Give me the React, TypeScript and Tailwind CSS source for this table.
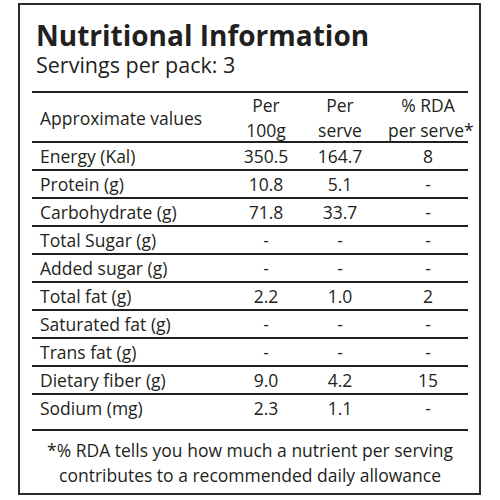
const rows = [
  { name: "Energy (Kal)", per100: "350.5", serve: "164.7", rda: "8" },
  { name: "Protein (g)", per100: "10.8", serve: "5.1", rda: "-" },
  { name: "Carbohydrate (g)", per100: "71.8", serve: "33.7", rda: "-" },
  { name: "Total Sugar (g)", per100: "-", serve: "-", rda: "-" },
  { name: "Added sugar (g)", per100: "-", serve: "-", rda: "-" },
  { name: "Total fat (g)", per100: "2.2", serve: "1.0", rda: "2" },
  { name: "Saturated fat (g)", per100: "-", serve: "-", rda: "-" },
  { name: "Trans fat (g)", per100: "-", serve: "-", rda: "-" },
  { name: "Dietary fiber (g)", per100: "9.0", serve: "4.2", rda: "15" },
  { name: "Sodium (mg)", per100: "2.3", serve: "1.1", rda: "-" },
];

export default function App() {
  return (
    <div
      className="w-[500px] h-[500px] bg-white text-[#231f20] pt-[3px] pl-[18px]"
      style={{ fontFamily: '"Open Sans", "Noto Sans", sans-serif' }}
    >
      <div className="w-[463px] h-[492px] border-2 border-[#2b2b2b] pl-[12px] pr-[11px] flex flex-col">
        <div className="pl-[4px] pt-[14px] h-[86px]">
          <h1 className="text-[28px] leading-[32px] font-bold">Nutritional Information</h1>
          <p className="text-[21.5px] leading-[24px] mt-[2px]">Servings per pack: 3</p>
        </div>

        <div className="border-t-2 border-[#231f20]">
          <div className="grid grid-cols-[198px_72px_76px_90px] h-[50px] items-center text-[17.5px] leading-[25px] whitespace-nowrap border-b-2 border-[#231f20]">
            <div className="pl-[8px]">Approximate values</div>
            <div className="text-center">
              Per
              <br />
              100g
            </div>
            <div className="text-center">
              Per
              <br />
              serve
            </div>
            <div className="text-center pl-[10px]">
              % RDA
              <br />
              per serve*
            </div>
          </div>

          {rows.map((r, i) => (
            <div
              key={r.name}
              className={
                "grid grid-cols-[198px_72px_76px_90px] items-center text-[17.5px] leading-[22px] border-b-2 border-[#231f20] " +
                (i === rows.length - 1 ? "h-[36px] pb-[8px]" : "h-[28px]")
              }
            >
              <div className="pl-[8px]">{r.name}</div>
              <div className="text-center">{r.per100}</div>
              <div className="text-center">{r.serve}</div>
              <div className="text-center pl-[10px]">{r.rda}</div>
            </div>
          ))}
        </div>

        <p className="text-[17.5px] leading-[25px] text-center pt-[7px]">
          *% RDA tells you how much a nutrient per serving
          <br />
          contributes to a recommended daily allowance
        </p>
      </div>
    </div>
  );
}
